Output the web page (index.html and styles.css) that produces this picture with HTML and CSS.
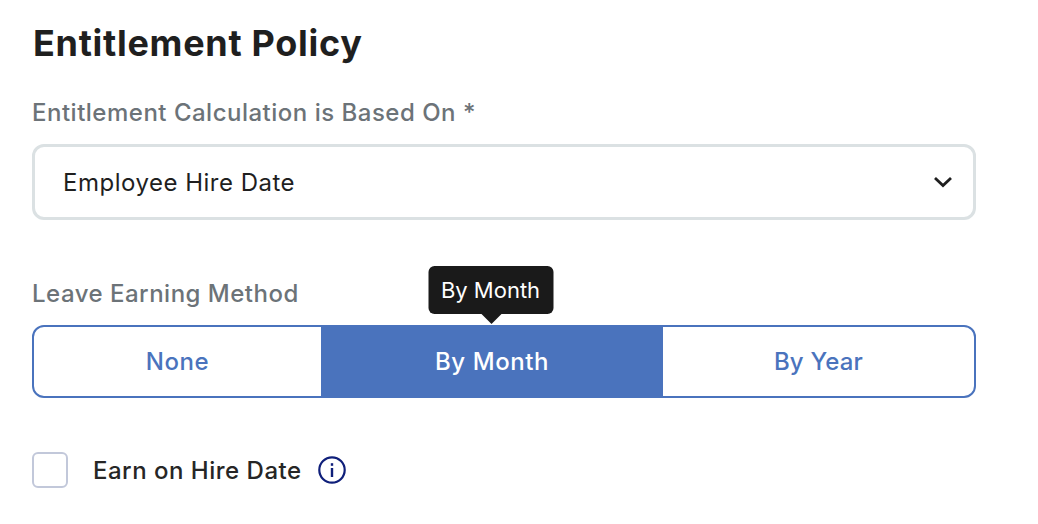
FILE: index.html
```html
<!DOCTYPE html>
<html lang="en">
<head>
<meta charset="utf-8">
<title>Entitlement Policy</title>
<link rel="stylesheet" href="styles.css">
</head>
<body>
<main class="form">
  <h1 class="title">Entitlement Policy</h1>
  <div class="label label-calc">Entitlement Calculation is Based On *</div>
  <div class="select">
    <span>Employee Hire Date</span>
    <svg class="chev" width="20" height="12" viewBox="0 0 20 12"><path d="M2 2 L10 9.5 L18 2" fill="none" stroke="#1f1f1f" stroke-width="2.8"/></svg>
  </div>
  <div class="label label-method">Leave Earning Method</div>
  <div class="segments">
    <div class="seg seg-none">None</div>
    <div class="seg seg-month active">By Month
      <div class="tooltip">By Month</div>
    </div>
    <div class="seg seg-year">By Year</div>
  </div>
  <div class="check-row">
    <span class="checkbox"></span>
    <span class="check-label">Earn on Hire Date</span>
    <svg class="info" width="28" height="28" viewBox="0 0 28 28"><circle cx="14" cy="14" r="12.7" fill="none" stroke="#0f1f7a" stroke-width="2.2"/><rect x="12.8" y="12" width="2.4" height="9" fill="#0f1f7a"/><rect x="12.8" y="7.2" width="2.4" height="2.6" fill="#0f1f7a"/></svg>
  </div>
</main>
</body>
</html>
```
FILE: styles.css
```css
* { box-sizing: border-box; }
html, body { margin: 0; padding: 0; background: #fff; }
body { font-family: Inter, sans-serif; width: 1038px; height: 524px; overflow: hidden; }
.form { width: 944px; margin-left: 32px; display: flex; flex-direction: column; padding-top: 20px; }
.title { margin: 0; font-size: 36px; line-height: 46px; font-weight: 700; color: #1f1f1f; letter-spacing: 0.7px; margin-left: 1px; }
.label { font-size: 24px; font-weight: 500; line-height: 30px; color: #6c7378; letter-spacing: 0.5px; }
.label-calc { margin-top: 32px; }
.select { margin-top: 16px; height: 76px; border: 3px solid #dbe1e3; border-radius: 12px; padding: 0 20px 0 28px; display: flex; align-items: center; justify-content: space-between; font-size: 24px; letter-spacing: 0.5px; color: #1f1f1f; }
.label-method { margin-top: 59px; }
.segments { margin-top: 16px; height: 73px; border: 2px solid #4a73bd; border-radius: 12px; display: flex; }
.seg { display: flex; align-items: center; justify-content: center; font-size: 24px; font-weight: 500; letter-spacing: 0.6px; color: #4a73bd; position: relative; }
.seg-none { width: 287px; }
.seg-month { width: 342px; background: #4a73bd; color: #fff; }
.seg-year { flex: 1; letter-spacing: 0.2px; }
.tooltip { position: absolute; left: calc(50% - 1.5px); transform: translateX(-50%); bottom: 82px; background: #1a1a1a; color: #fff; font-size: 22px; font-weight: 400; letter-spacing: 0; line-height: 48px; height: 48px; width: 125px; text-align: center; border-radius: 6px; }
.tooltip::after { content: ""; position: absolute; left: calc(50% + 1px); margin-left: -10px; top: 100%; border: 10px solid transparent; border-top-color: #1a1a1a; border-bottom: 0; }
.check-row { margin-top: 54px; display: flex; align-items: center; }
.checkbox { width: 36px; height: 36px; border: 2px solid #c2c8da; border-radius: 6px; }
.check-label { margin-left: 25px; font-size: 24px; font-weight: 500; letter-spacing: 0.5px; color: #262626; }
.info { margin-left: 16px; }
```
